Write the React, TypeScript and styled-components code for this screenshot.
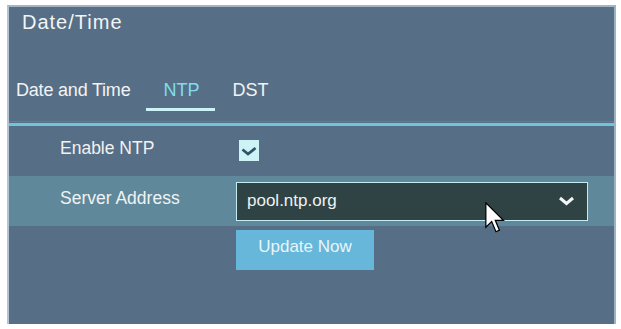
import React from 'react';
import styled, { createGlobalStyle } from 'styled-components';

const GlobalStyle = createGlobalStyle`
  body {
    margin: 0;
    background: #ffffff;
    font-family: "Liberation Sans", Arial, sans-serif;
  }
`;

const Panel = styled.div`
  position: relative;
  box-sizing: border-box;
  margin: 5px 0 0 7px;
  width: 609px;
  height: 319px;
  display: flex;
  flex-direction: column;
  background: #566f86;
  border-top: 2px solid #a3b5c5;
  border-left: 2px solid #b3c3d1;
  border-right: 2px solid #9cb2c5;
`;

const Title = styled.div`
  margin: 3px 0 0 13px;
  font-size: 20px;
  line-height: 24px;
  letter-spacing: 1px;
  color: #f2f4f5;
`;

const TabBar = styled.div`
  display: flex;
  margin-top: 46px;
  padding-left: 7px;
  padding-bottom: 10px;
  border-bottom: 1px solid #6b7a90;
`;

const Tab = styled.div<{ $active?: boolean; $first?: boolean }>`
  padding: 0 16px 8px ${(p) => (p.$first ? '0' : '17px')};
  font-size: 18px;
  line-height: 20px;
  letter-spacing: ${(p) => (p.$first ? '-0.2px' : '0')};
  color: ${(p) => (p.$active ? '#80dcec' : '#f1f3f4')};
  border-bottom: 3px solid ${(p) => (p.$active ? '#cdf3f9' : 'transparent')};
`;

const Divider = styled.div`
  height: 3px;
  margin-top: 1px;
  background: #6ec6d8;
`;

const Row = styled.div<{ $highlight?: boolean }>`
  display: flex;
  align-items: center;
  height: 50px;
  padding-left: 51px;
  background: ${(p) => (p.$highlight ? '#5f899b' : 'transparent')};
`;

const Label = styled.div`
  width: 176px;
  flex-shrink: 0;
  margin-bottom: 6px;
  font-size: 17.5px;
  color: #f0f2f3;
`;

const Checkbox = styled.div`
  width: 20px;
  height: 21px;
  margin: 0 0 1px 3px;
  display: flex;
  align-items: center;
  justify-content: center;
  background: #cdf3f7;
`;

const Select = styled.div`
  position: relative;
  box-sizing: border-box;
  width: 352px;
  height: 39px;
  display: flex;
  align-items: center;
  justify-content: space-between;
  padding: 0 12px 0 10px;
  background: #2f4344;
  border: 1px solid #c4ecf2;
  font-size: 17px;
  color: #eef2f2;
`;

const Cursor = styled.svg`
  position: absolute;
  left: 248px;
  top: 19px;
`;

const ButtonRow = styled.div`
  padding: 4px 0 0 227px;
`;

const Button = styled.button`
  width: 138px;
  height: 40px;
  border: none;
  background: #66b7da;
  color: #e8f5f9;
  font-family: "Liberation Sans", Arial, sans-serif;
  font-size: 17px;
  padding: 0 0 6px;
`;

export default function App() {
  return (
    <>
      <GlobalStyle />
      <Panel>
        <Title>Date/Time</Title>
        <TabBar>
          <Tab $first>Date and Time</Tab>
          <Tab $active>NTP</Tab>
          <Tab>DST</Tab>
        </TabBar>
        <Divider />
        <Row>
          <Label>Enable NTP</Label>
          <Checkbox>
            <svg width="16" height="10" viewBox="0 0 16 10">
              <path d="M1.5 3.5 L7 8 L14.5 2" fill="none" stroke="#2e5567" strokeWidth="2.8" />
            </svg>
          </Checkbox>
        </Row>
        <Row $highlight>
          <Label>Server Address</Label>
          <Select>
            <span>pool.ntp.org</span>
            <svg width="17" height="10" viewBox="0 0 17 10">
              <path d="M2 2 L8.5 7.5 L15 2" fill="none" stroke="#f4f6f6" strokeWidth="3" />
            </svg>
            <Cursor width="20" height="31" viewBox="0 0 12.6 19.6">
              <path
                d="M0.5 0.5 L0.5 16 L4.2 12.4 L6.9 18.8 L9.1 17.8 L6.5 11.6 L11.6 11.6 Z"
                fill="#ffffff"
                stroke="#000000"
                strokeWidth="0.8"
                strokeLinejoin="miter"
              />
            </Cursor>
          </Select>
        </Row>
        <ButtonRow>
          <Button>Update Now</Button>
        </ButtonRow>
      </Panel>
    </>
  );
}
